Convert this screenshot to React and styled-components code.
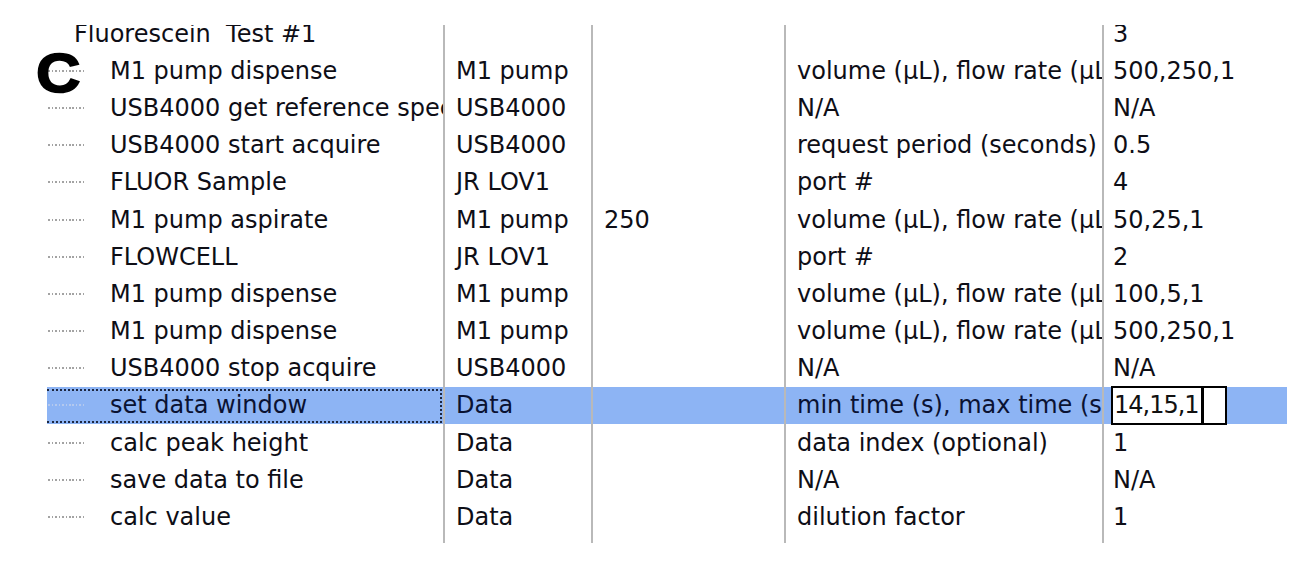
import React from 'react'
import styled, { createGlobalStyle } from 'styled-components'

const rows = [
  { name: 'Fluorescein  Test #1', parent: true, device: '', extra: '', param: '', value: '3' },
  { name: 'M1 pump dispense', device: 'M1 pump', extra: '', param: 'volume (µL), flow rate (µL/s), valve', value: '500,250,1' },
  { name: 'USB4000 get reference spectrum', device: 'USB4000', extra: '', param: 'N/A', value: 'N/A' },
  { name: 'USB4000 start acquire', device: 'USB4000', extra: '', param: 'request period (seconds)', value: '0.5' },
  { name: 'FLUOR Sample', device: 'JR LOV1', extra: '', param: 'port #', value: '4' },
  { name: 'M1 pump aspirate', device: 'M1 pump', extra: '250', param: 'volume (µL), flow rate (µL/s), valve', value: '50,25,1' },
  { name: 'FLOWCELL', device: 'JR LOV1', extra: '', param: 'port #', value: '2' },
  { name: 'M1 pump dispense', device: 'M1 pump', extra: '', param: 'volume (µL), flow rate (µL/s), valve', value: '100,5,1' },
  { name: 'M1 pump dispense', device: 'M1 pump', extra: '', param: 'volume (µL), flow rate (µL/s), valve', value: '500,250,1' },
  { name: 'USB4000 stop acquire', device: 'USB4000', extra: '', param: 'N/A', value: 'N/A' },
  { name: 'set data window', device: 'Data', extra: '', param: 'min time (s), max time (s), index', value: '14,15,1', selected: true },
  { name: 'calc peak height', device: 'Data', extra: '', param: 'data index (optional)', value: '1' },
  { name: 'save data to file', device: 'Data', extra: '', param: 'N/A', value: 'N/A' },
  { name: 'calc value', device: 'Data', extra: '', param: 'dilution factor', value: '1' },
]

const App = () => {
  return (
    <Figure>
      <GlobalStyle />
      <PanelLabel>C</PanelLabel>
      <Viewport>
        <Table>
          {rows.map((r, i) => (
            <Row key={i} $selected={r.selected}>
              <TreeCell $parent={r.parent} $focused={r.selected}>
                {!r.parent && <Connector $selected={r.selected} />}
                <Label>{r.name}</Label>
              </TreeCell>
              <Cell>{r.device}</Cell>
              <Cell>{r.extra}</Cell>
              <Cell>{r.param}</Cell>
              <ValueCell>
                {r.selected ? (
                  <EditBox>
                    <span>{r.value}</span>
                    <Caret />
                  </EditBox>
                ) : (
                  r.value
                )}
              </ValueCell>
            </Row>
          ))}
          <Filler>
            <TreeCell />
            <Cell />
            <Cell />
            <Cell />
            <ValueCell />
          </Filler>
        </Table>
      </Viewport>
    </Figure>
  )
}

const GlobalStyle = createGlobalStyle`
  html, body {
    margin: 0;
    padding: 0;
    background: #ffffff;
  }
  body {
    font-family: "DejaVu Sans", "Liberation Sans", sans-serif;
  }
`

const Figure = styled.div`
  position: relative;
  width: 1311px;
  height: 574px;
  padding-top: 25px;
  box-sizing: border-box;
  background: #fff;
  overflow: hidden;
`

const PanelLabel = styled.div`
  position: absolute;
  left: 36px;
  top: 46px;
  z-index: 2;
  font-family: "Liberation Sans", Arial, sans-serif;
  font-weight: 700;
  font-size: 55px;
  line-height: 1;
  color: #000;
  -webkit-text-stroke: 1.6px #000;
  transform: scaleX(1.12);
  transform-origin: left center;
  pointer-events: none;
`

const Viewport = styled.div`
  position: relative;
  z-index: 1;
  margin-left: 47px;
  width: 1240px;
  height: 518px;
  overflow: hidden;
`

const Table = styled.div`
  display: flex;
  flex-direction: column;
  height: calc(518px + 9.8px);
  margin-top: -9.8px;
  font-size: 24px;
  color: #0e0e16;
`

const Row = styled.div`
  display: grid;
  grid-template-columns: 396px 148px 193px 318px 185px;
  height: 37.17px;
  flex: none;
  background: ${(p) => (p.$selected ? '#8db4f4' : 'transparent')};
  color: ${(p) => (p.$selected ? '#0a1232' : 'inherit')};
`

const Filler = styled(Row)`
  flex: 1;
  height: auto;
`

const Cell = styled.div`
  display: flex;
  align-items: center;
  padding-left: 11px;
  border-left: 2px solid #b9b9b9;
  white-space: nowrap;
  overflow: hidden;
  box-sizing: border-box;
`

const ValueCell = styled(Cell)`
  padding-left: 9px;
  overflow: visible;
`

const TreeCell = styled.div`
  position: relative;
  display: flex;
  align-items: center;
  padding-left: ${(p) => (p.$parent ? '27px' : '1px')};
  white-space: pre;
  overflow: hidden;
  box-sizing: border-box;

  &::after {
    content: '';
    display: ${(p) => (p.$focused ? 'block' : 'none')};
    position: absolute;
    left: 0;
    right: 1px;
    top: 2px;
    bottom: 1px;
    border: 2px dotted #1d2740;
    border-left: none;
  }
`

const Connector = styled.span`
  flex: none;
  width: 36px;
  height: 2px;
  margin-right: 26px;
  background-image: repeating-linear-gradient(
    90deg,
    ${(p) => (p.$selected ? '#b4c9ee' : '#a3a3a3')} 0 1.5px,
    transparent 1.5px 3.5px
  );
`

const Label = styled.span`
  overflow: hidden;
`

const EditBox = styled.div`
  display: flex;
  align-items: center;
  align-self: stretch;
  margin: -1px 0 -1px -2px;
  width: 116px;
  padding-left: 1px;
  border: 2px solid #000;
  background: #fff;
  color: #111;
  letter-spacing: -1px;
  box-sizing: border-box;
`

const Caret = styled.span`
  align-self: stretch;
  width: 3px;
  margin-left: 2px;
  background: #000;
`

export default App
